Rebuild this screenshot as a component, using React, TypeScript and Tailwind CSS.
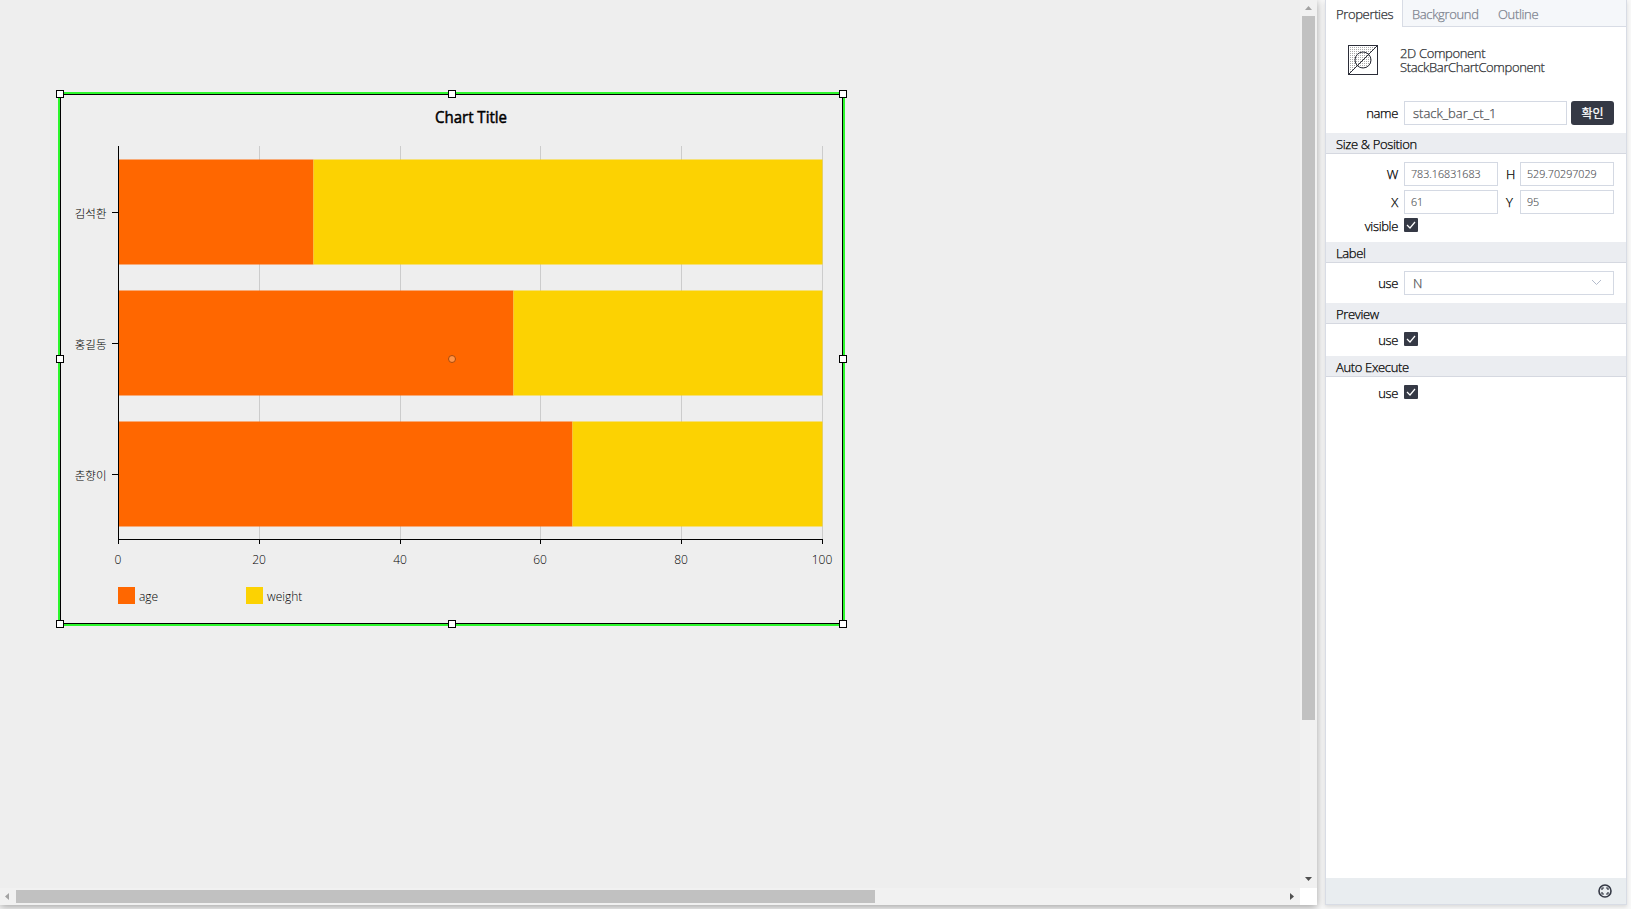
import React from "react";

const rows = [
  { name: "김석환", top: 159.5, split: 313.5 },
  { name: "홍길동", top: 290.5, split: 513.5 },
  { name: "춘향이", top: 421.5, split: 572.5 },
];
const ticks = [
  { v: "0", x: 118.5 },
  { v: "20", x: 259.5 },
  { v: "40", x: 400.5 },
  { v: "60", x: 540.5 },
  { v: "80", x: 681.5 },
  { v: "100", x: 822.5 },
];
const handles = [
  [56, 90], [448, 90], [839, 90],
  [56, 355], [839, 355],
  [56, 620], [448, 620], [839, 620],
];

function Chart() {
  return (
    <svg width="860" height="640" className="block" fontWeight="300">
      {ticks.slice(1).map((t) => (
        <path key={t.v} d={`M${t.x} 146V539`} stroke="#ccc" />
      ))}
      {rows.map((r) => (
        <g key={r.name}>
          <rect x="118.5" y={r.top} width={r.split - 118.5} height="105" fill="#ff6700" />
          <rect x={r.split} y={r.top} width={822.5 - r.split} height="105" fill="#fcd202" />
          <path d={`M112 ${r.top + 53}H118`} stroke="#000" />
          <text x="106.500" y={r.top + 58} textAnchor="end" fontSize="11.500">{r.name}</text>
        </g>
      ))}
      <path d="M118.5 146V544M118 539.5H823" stroke="#000" fill="none" />
      {ticks.map((t) => (
        <g key={t.v}>
          <path d={`M${t.x} 539V544`} stroke="#000" />
          <text x={t.x - 0.5} y="564" textAnchor="middle" fontSize="12">{t.v}</text>
        </g>
      ))}
      <text x="435" y="123" fontSize="16" fontWeight="500" stroke="#000" strokeWidth="0.5" textLength="72" lengthAdjust="spacingAndGlyphs">Chart Title</text>
      <rect x="118" y="587" width="17" height="17" fill="#ff6700" />
      <text x="139" y="601" fontSize="12">age</text>
      <rect x="246" y="587" width="17" height="17" fill="#fcd202" />
      <text x="267" y="601" fontSize="12">weight</text>
      <rect x="59" y="93" width="785" height="532" fill="none" stroke="#2cf62c" strokeWidth="2" />
      <rect x="60.5" y="94.5" width="782" height="529" fill="none" stroke="#000" />
      {handles.map(([x, y]) => (
        <rect key={`${x}-${y}`} x={x + 0.5} y={y + 0.5} width="7" height="7" fill="#fff" stroke="#000" />
      ))}
      <circle cx="452" cy="359" r="3.5" fill="#ff9447" stroke="#a84a0c" />
    </svg>
  );
}

function Section({ title }: { title: string }) {
  return (
    <h3 className="flex h-[21px] shrink-0 items-center border-b border-[#d5d8e0] bg-[#ebedf1] pl-[10px] pt-[2px] text-[13px] font-light tracking-[-0.35px] text-black">
      {title}
    </h3>
  );
}

function Label({ children }: { children: string }) {
  return <span className="w-[72px] shrink-0 text-right tracking-[-0.35px]">{children}</span>;
}

function Check() {
  return (
    <span className="ml-[6px] block size-[14px] rounded-[1px] bg-[#353945]">
      <svg width="14" height="14" fill="none" stroke="#fff" strokeWidth="1.2">
        <path d="M3 7l3 3 5-6" />
      </svg>
    </span>
  );
}

function CheckRow({ label }: { label: string }) {
  return (
    <div className="flex h-[14px] items-center">
      <div className="flex pt-[2px]"><Label>{label}</Label></div>
      <Check />
    </div>
  );
}

const box = "flex h-6 items-center border border-[#d4d9e3] bg-white text-[#505256]";
const numberBox = "ml-[6px] w-[94px] pl-[6px] text-[10.7px] [-webkit-text-stroke:0.15px]";

export default function App() {
  return (
    <div className="flex h-[909px] w-[1631px] overflow-hidden bg-[#f8f8f8] font-['Open_Sans','Noto_Sans_CJK_KR',sans-serif] text-[13px] font-light leading-none text-black [-webkit-text-stroke:0.25px]">
      <main className="grid h-[905px] w-[1317px] shrink-0 grid-cols-[1300px_17px] grid-rows-[888px_17px] bg-white shadow-[0_2px_8px_rgba(0,0,0,0.35)]">
        <div className="overflow-hidden bg-[#eee]">
          <Chart />
        </div>
        <div className="flex flex-col items-center bg-[#f1f1f1]">
          <svg width="17" height="16"><path d="M5 10L8.500 6L12 10Z" fill="#a3a3a3" /></svg>
          <div className="h-[704px] w-[13px] bg-[#c1c1c1]" />
          <svg className="mt-auto" width="17" height="17"><path d="M5 6H12L8.500 10Z" fill="#505050" /></svg>
        </div>
        <div className="flex items-center bg-[#f1f1f1]">
          <svg width="16" height="17"><path d="M9 5V12L5 8.500Z" fill="#a3a3a3" /></svg>
          <div className="h-[13px] w-[859px] bg-[#c1c1c1]" />
          <svg className="ml-auto" width="17" height="17"><path d="M7 5V12L11 8.500Z" fill="#505050" /></svg>
        </div>
      </main>
      <aside className="ml-2 flex h-[905px] w-[302px] flex-col border-x border-b border-[#d8dce5] bg-white shadow-[0_2px_4px_rgba(0,0,0,0.12)]">
        <nav className="flex h-[27px] shrink-0 bg-[#f5f7fa] tracking-[-0.35px] text-[#7c828e]">
          <span className="flex w-[77px] items-center border-r border-[#d8dce5] bg-white pl-[10px] pt-[2px] text-[#2d2f33]">Properties</span>
          <span className="flex w-[88px] items-center border-b border-[#d8dce5] pl-[9px] pt-[2px]">Background</span>
          <span className="flex grow items-center border-b border-[#d8dce5] pl-[7px] pt-[2px]">Outline</span>
        </nav>
        <header className="flex h-[74px] shrink-0 pl-[22px] pt-[18px]">
          <svg width="30" height="30" fill="none" stroke="#2b2d38">
            <defs>
              <pattern id="dots" width="2" height="2" patternUnits="userSpaceOnUse">
                <rect width="1" height="1" fill="#aaa" stroke="none" />
              </pattern>
            </defs>
            <path d="M1 1H29L1 29Z" fill="url(#dots)" stroke="none" />
            <path d="M9 21A8 8 0 0 0 21 9Z" fill="url(#dots)" stroke="none" />
            <rect x="0.500" y="0.500" width="29" height="29" />
            <circle cx="15" cy="15" r="8" />
            <path d="M1 29L29 1" />
          </svg>
          <div className="ml-[22px] flex flex-col gap-px pt-[2px] tracking-[-0.35px] text-[#2d2f33]">
            <span>2D Component</span>
            <span>StackBarChartComponent</span>
          </div>
        </header>
        <div className="flex h-6 shrink-0 items-center">
          <Label>name</Label>
          <span className={`${box} ml-[6px] w-[163px] pl-2`}>stack_bar_ct_1</span>
          <button className="ml-1 h-6 w-[43px] rounded-[3px] bg-[#353945] pt-[2px] text-[12px] font-normal text-white">확인</button>
        </div>
        <div className="h-2 shrink-0" />
        <Section title="Size & Position" />
        <div className="flex h-[88px] shrink-0 flex-col gap-1 pt-2">
          <div className="flex items-center">
            <Label>W</Label>
            <span className={`${box} ${numberBox}`}>783.16831683</span>
            <span className="ml-2 w-[8px]">H</span>
            <span className={`${box} ${numberBox}`}>529.70297029</span>
          </div>
          <div className="flex items-center">
            <Label>X</Label>
            <span className={`${box} ${numberBox}`}>61</span>
            <span className="ml-2 w-[8px]">Y</span>
            <span className={`${box} ${numberBox}`}>95</span>
          </div>
          <CheckRow label="visible" />
        </div>
        <Section title="Label" />
        <div className="flex h-[40px] shrink-0 items-start pt-2">
          <div className="flex items-center">
            <Label>use</Label>
            <span className={`${box} ml-[6px] w-[210px] justify-between pl-2 pr-[11px]`}>
              N
              <svg width="12" height="8" fill="none" stroke="#b4bccc"><path d="M2 1l4.500 4.500L11 1" /></svg>
            </span>
          </div>
        </div>
        <Section title="Preview" />
        <div className="h-8 shrink-0 pt-2"><CheckRow label="use" /></div>
        <Section title="Auto Execute" />
        <div className="h-8 shrink-0 pt-2"><CheckRow label="use" /></div>
        <footer className="mt-auto flex h-[26px] items-center justify-end bg-[#e9edf0] pr-[14px]">
          <svg width="14" height="14" fill="none" stroke="#353945">
            <circle cx="7" cy="7" r="6" strokeWidth="1.6" />
            <path d="M4 6V4H6M8 4H10V6M10 8V10H8M6 10H4V8" strokeWidth="1.2" />
          </svg>
        </footer>
      </aside>
    </div>
  );
}
